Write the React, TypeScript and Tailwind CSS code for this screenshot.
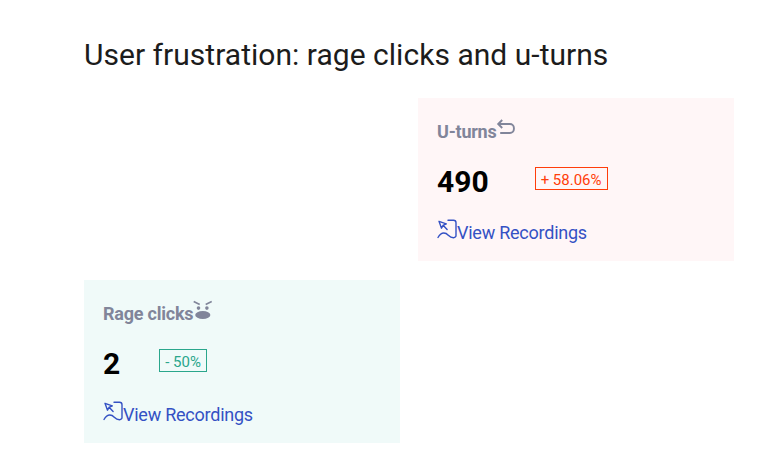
import React from "react";

function CursorIcon() {
  return (
    <svg className="mt-px h-[20px] w-[20px] shrink-0" viewBox="0 0 20 20" fill="none" stroke="#3451c4" strokeWidth="1.4" strokeLinecap="round" strokeLinejoin="round">
      <path d="M2 2.3l7.3 2.6-3.2 1.4L4.5 9.2z M6.1 6.3l4 4.2" />
      <path d="M11 1.3H16.5a2.5 2.5 0 0 1 2.5 2.5V16.4a2.3 2.3 0 0 1-2.5 2.3c-3.3 0-4-1.2-5.2-2.5C10 14.8 9 14 6.8 14c-3 0-4.4 2-5.8 4.5" />
    </svg>
  );
}

function UTurnIcon() {
  return (
    <svg className="mt-[2px] -ml-px h-[18px] w-[20px]" viewBox="0 0 20 18" fill="none" stroke="#81859a" strokeWidth="1.9">
      <path d="M6.2 1L2.2 5l4 4M2.7 5h11.2a4 4 0 0 1 4 4v1a4 4 0 0 1-4 4H4.2" />
    </svg>
  );
}

function RageIcon() {
  return (
    <svg className="mt-px -ml-px h-[20px] w-[20px]" viewBox="0 0 20 20" fill="#81859a">
      <path d="M1.7 1.5l6 3M19.7 1.5l-6 3" stroke="#81859a" strokeWidth="1.6" />
      <circle cx="6.5" cy="8.1" r="1.8" />
      <circle cx="14.9" cy="8.1" r="1.8" />
      <ellipse cx="10.8" cy="15" rx="7.6" ry="4" />
    </svg>
  );
}

function Card({ title, value, change, good, icon }: { title: string; value: string; change: string; good?: boolean; icon: React.ReactNode }) {
  return (
    <section className={`h-[163px] w-[316px] px-[19px] pt-[19px] ${good ? "bg-[#f0faf9]" : "col-start-2 bg-[#fff6f7]"}`}>
      <div className="flex h-[30px] text-[18px] leading-[30px] font-bold tracking-[-0.22px] text-[#81859a]">{title}{icon}</div>
      <div className="mt-[14px] flex h-[42px] items-start">
        <strong className="text-[30px] leading-[42px] text-black">{value}</strong>
        <span className={`mt-[6px] flex h-[23px] items-center border px-[5px] pt-[4px] text-[15px] leading-[19px] ${good ? "ml-[39px] border-[#2aa68c] text-[#2aa68c]" : "ml-[46px] border-[#ff3d0a] text-[#ff3d0a]"}`}>{change}</span>
      </div>
      <div className="mt-[15px] flex h-[30px] text-[18px] leading-[30px] tracking-[-0.24px] text-[#3451c4]"><CursorIcon />View Recordings</div>
    </section>
  );
}

export default function App() {
  return (
    <main className="h-[471px] w-[778px] bg-white pt-[34px] pl-[84px] font-['Roboto',sans-serif]">
      <h1 className="h-[64px] text-[30px] leading-[42px] tracking-[0.03px] text-[#1c1c1c]">User frustration: rage clicks and u-turns</h1>
      <div className="grid grid-cols-[316px_316px] gap-x-[18px] gap-y-[19px]">
        <Card title="U-turns" value="490" change="+ 58.06%" icon={<UTurnIcon />} />
        <Card title="Rage clicks" value="2" change="- 50%" good icon={<RageIcon />} />
      </div>
    </main>
  );
}
